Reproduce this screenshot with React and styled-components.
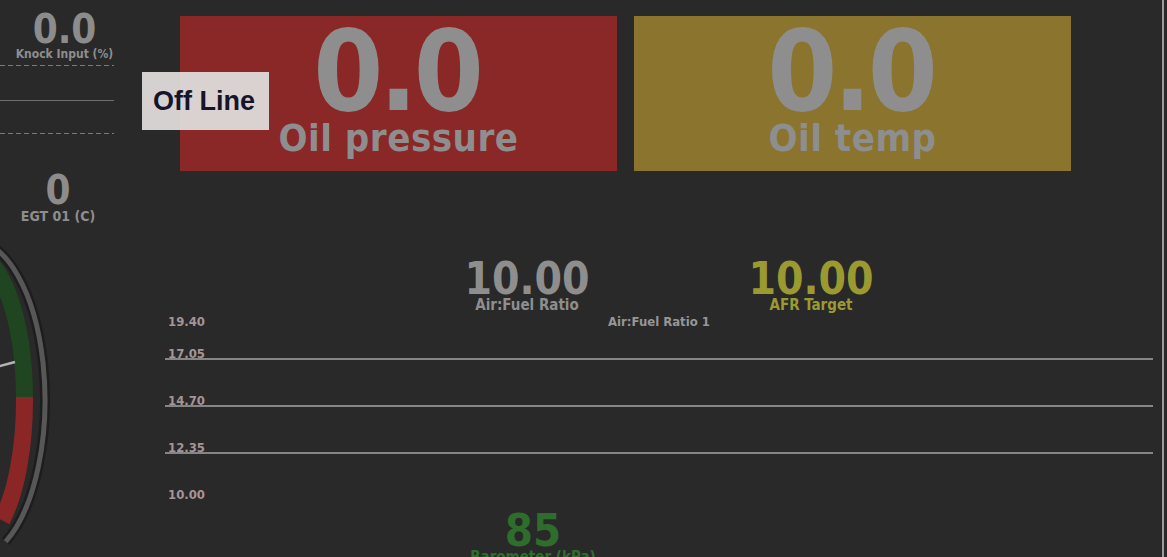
import styled, { createGlobalStyle } from "styled-components";

const GlobalStyle = createGlobalStyle`
  html, body {
    margin: 0;
    padding: 0;
    background: #292929;
  }
  body {
    font-family: "DejaVu Sans", "Liberation Sans", sans-serif;
  }
`;

const Screen = styled.div`
  position: relative;
  display: flex;
  width: 1167px;
  height: 557px;
  overflow: hidden;
  background: #292929;
  font-family: "DejaVu Sans", sans-serif;
  font-stretch: semi-condensed;
  font-weight: bold;
`;

const LeftCol = styled.div`
  width: 140px;
  flex-shrink: 0;
  display: flex;
  flex-direction: column;
`;

const SideReadout = styled.div`
  display: flex;
  flex-direction: column;
  align-items: center;
  width: ${(p) => p.$width}px;
  margin-top: ${(p) => p.$top}px;
  color: #8c8c8c;
`;

const SideValue = styled.div`
  font-size: 40px;
  line-height: 1;
`;

const SideLabel = styled.div`
  font-size: ${(p) => p.$size}px;
  line-height: 1;
  margin-top: ${(p) => p.$gap}px;
  white-space: nowrap;
  color: #8e8e8e;
`;

const Rule = styled.div`
  width: 114px;
  height: 1px;
  margin-top: ${(p) => p.$top}px;
  background: ${(p) =>
    p.$dashed
      ? "repeating-linear-gradient(to right, #7a7a7a 0 5px, transparent 5px 8px)"
      : "#6e6e6e"};
`;

const Gauge = styled.svg`
  display: block;
  margin-top: 4px;
`;

const Main = styled.div`
  width: 1022px;
  display: flex;
  flex-direction: column;
`;

const Edge = styled.div`
  width: 2px;
  background: #9c9c9c;
  flex-shrink: 0;
`;

const TopRow = styled.div`
  display: flex;
  gap: 17px;
  margin-top: 16px;
  padding-left: 40px;
`;

const Tile = styled.div`
  width: 437px;
  height: 155px;
  background: ${(p) => p.$bg};
  display: flex;
  flex-direction: column;
  align-items: center;
  color: #8e8e8e;
  overflow: hidden;
`;

const TileValue = styled.div`
  font-size: 112px;
  line-height: 1;
  margin-top: -1px;
  letter-spacing: -4px;
  text-indent: -4px;
`;

const TileLabel = styled.div`
  font-size: 38px;
  line-height: 1;
  margin-top: -8px;
  letter-spacing: 0.5px;
`;

const ReadoutRow = styled.div`
  display: flex;
  gap: ${(p) => p.$gap || 0}px;
  margin-top: ${(p) => p.$top}px;
  padding-left: ${(p) => p.$left}px;
`;

const Readout = styled.div`
  width: 170px;
  display: flex;
  flex-direction: column;
  align-items: center;
  color: ${(p) => p.$color};
`;

const ReadoutValue = styled.div`
  font-size: ${(p) => p.$size || 44}px;
  line-height: 1;
`;

const ReadoutLabel = styled.div`
  font-size: 15px;
  line-height: 1;
  margin-top: -3px;
  white-space: nowrap;
`;

const Chart = styled.div`
  width: 988px;
  margin-left: 25px;
  margin-top: 2px;
  display: flex;
  flex-direction: column;
`;

const ChartHead = styled.div`
  position: relative;
  display: flex;
  justify-content: center;
  height: 13px;
`;

const ChartTitle = styled.div`
  font-size: 13px;
  line-height: 1;
  color: #969696;
`;

const AxisLabel = styled.div`
  font-size: 13px;
  line-height: 1;
  color: #a69496;
  padding-left: 3px;
`;

const HeadAxis = styled(AxisLabel)`
  position: absolute;
  left: 0;
  top: 0;
`;

const GridRow = styled.div`
  box-sizing: border-box;
  height: ${(p) => p.$h}px;
  display: flex;
  align-items: flex-end;
  border-bottom: 2px solid #858585;
  ${AxisLabel} {
    margin-bottom: -2px;
  }
`;

const BottomAxis = styled(AxisLabel)`
  margin-top: 34px;
`;

const Badge = styled.div`
  position: absolute;
  left: 142px;
  top: 72px;
  width: 127px;
  height: 58px;
  box-sizing: border-box;
  padding-left: 11px;
  display: flex;
  align-items: center;
  background: rgba(222, 216, 217, 0.96);
  color: #15152a;
  font-family: "Liberation Sans", Arial, sans-serif;
  font-stretch: normal;
  font-size: 27px;
  font-weight: bold;
`;

// point on an ellipse centred at the gauge hub, t in degrees (0 = pointing right)
const hub = { x: -27, y: 400 };
const ep = (t, rx, ry) => {
  const a = (t * Math.PI) / 180;
  return [hub.x + rx * Math.cos(a), hub.y + ry * Math.sin(a)];
};
const arc = (t0, t1, rx, ry) => {
  const [x0, y0] = ep(t0, rx, ry);
  const [x1, y1] = ep(t1, rx, ry);
  return `M ${x0} ${y0} A ${rx} ${ry} 0 0 1 ${x1} ${y1}`;
};

function GaugeArc() {
  return (
    <Gauge width="60" height="330" viewBox="0 227 60 330">
      <path d={arc(-90, 63, 72, 159)} fill="none" stroke="#1d1d1d" strokeWidth="10" />
      <path d={arc(-90, 63, 72, 159)} fill="none" stroke="#575757" strokeWidth="5" />
      <path d={arc(-90, -1.2, 51.5, 145)} fill="none" stroke="#1f4521" strokeWidth="17" />
      <path d={arc(-1.2, 56, 51.5, 145)} fill="none" stroke="#8a2626" strokeWidth="17" />
      <line x1="-10" y1="368.7" x2="15" y2="362" stroke="#b4b4b4" strokeWidth="2.5" />
    </Gauge>
  );
}

export default function App() {
  return (
    <>
      <GlobalStyle />
      <Screen>
        <LeftCol>
          <SideReadout $width={129} $top={9}>
            <SideValue>0.0</SideValue>
            <SideLabel $size={12} $gap={-1}>Knock Input (%)</SideLabel>
          </SideReadout>
          <Rule $dashed $top={5} />
          <Rule $top={34} />
          <Rule $dashed $top={32} />
          <SideReadout $width={116} $top={36}>
            <SideValue>0</SideValue>
            <SideLabel $size={14} $gap={-1}>EGT 01 (C)</SideLabel>
          </SideReadout>
          <GaugeArc />
        </LeftCol>
        <Main>
          <TopRow>
            <Tile $bg="#8a2727">
              <TileValue>0.0</TileValue>
              <TileLabel>Oil pressure</TileLabel>
            </Tile>
            <Tile $bg="#8a742e">
              <TileValue>0.0</TileValue>
              <TileLabel>Oil temp</TileLabel>
            </Tile>
          </TopRow>
          <ReadoutRow $top={86} $left={302} $gap={114}>
            <Readout $color="#8e8e8e">
              <ReadoutValue>10.00</ReadoutValue>
              <ReadoutLabel>Air:Fuel Ratio</ReadoutLabel>
            </Readout>
            <Readout $color="#9a9a30">
              <ReadoutValue>10.00</ReadoutValue>
              <ReadoutLabel>AFR Target</ReadoutLabel>
            </Readout>
          </ReadoutRow>
          <Chart>
            <ChartHead>
              <HeadAxis>19.40</HeadAxis>
              <ChartTitle>Air:Fuel Ratio 1</ChartTitle>
            </ChartHead>
            <GridRow $h={32}><AxisLabel>17.05</AxisLabel></GridRow>
            <GridRow $h={47}><AxisLabel>14.70</AxisLabel></GridRow>
            <GridRow $h={47}><AxisLabel>12.35</AxisLabel></GridRow>
            <BottomAxis>10.00</BottomAxis>
          </Chart>
          <ReadoutRow $top={7} $left={308}>
            <Readout $color="#2e6d2b">
              <ReadoutValue $size={45}>85</ReadoutValue>
              <ReadoutLabel>Barometer (kPa)</ReadoutLabel>
            </Readout>
          </ReadoutRow>
        </Main>
        <Edge />
        <Badge>Off Line</Badge>
      </Screen>
    </>
  );
}
